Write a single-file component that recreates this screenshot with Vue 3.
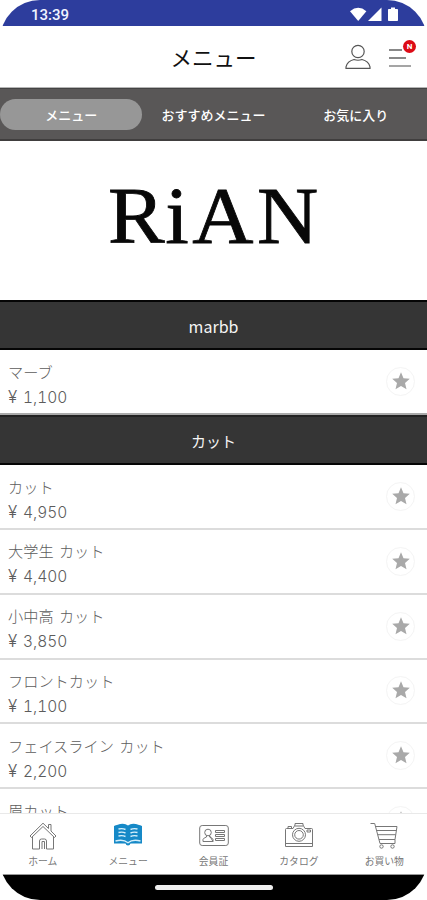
<script setup>
const tabs = ['メニュー', 'おすすめメニュー', 'お気に入り']

const sections = [
  {
    title: 'marbb',
    latin: true,
    items: [{ name: 'マーブ', price: '1,100' }]
  },
  {
    title: 'カット',
    items: [
      { name: 'カット', price: '4,950' },
      { name: '大学生 カット', price: '4,400' },
      { name: '小中高 カット', price: '3,850' },
      { name: 'フロントカット', price: '1,100' },
      { name: 'フェイスライン カット', price: '2,200' },
      { name: '眉カット' }
    ]
  }
]
</script>

<template>
  <div class="phone">
    <div class="status-bar">
      <span class="clock">13:39</span>
      <svg class="status-icons" viewBox="0 0 50 16" fill="#fff">
        <path d="M0 4.200Q8.200-2.600 16.400 4.200L8.200 14Z" />
        <path d="M31.500.5V14H18Z" />
        <path d="M41 .5h4v1.500h2.200q.8 0 .8.800v10.400q0 .8-.8.800h-8.400q-.8 0-.8-.8V2.800q0-.8.800-.8H41Z" />
      </svg>
    </div>

    <header class="header">
      <h1 class="header-title">メニュー</h1>
      <div class="header-actions">
        <svg class="user-icon" viewBox="0 0 26 26" fill="none" stroke="#555" stroke-width="1.200">
          <circle cx="13" cy="7.500" r="6.200" />
          <path d="M1 24.300v-1.500c1-4.300 4-6.300 8-7.300q4 1.500 8 0c4 1 7 3 8 7.300v1.500Z" />
        </svg>
        <div class="burger">
          <span></span><span></span><span></span>
          <b class="badge">N</b>
        </div>
      </div>
    </header>

    <nav class="tabs">
      <a v-for="(tab, i) in tabs" :key="tab" :class="['tab', { active: i === 0 }]">{{ tab }}</a>
    </nav>

    <main class="content">
      <div class="brand">
        <svg viewBox="0 0 214 70">
          <text x="1 55 80.500 141.500" y="60" transform="scale(1.060 1)">RiAN</text>
        </svg>
      </div>

      <section v-for="section in sections" :key="section.title">
        <h2 :class="['section-title', { latin: section.latin }]">{{ section.title }}</h2>
        <ul class="items">
          <li v-for="item in section.items" :key="item.name" class="item">
            <div class="item-text">
              <p class="item-name">{{ item.name }}</p>
              <p v-if="item.price" class="item-price"><span class="yen">¥</span>{{ item.price }}</p>
            </div>
            <span class="favorite">
              <svg viewBox="0 0 18 18" fill="#a9a9a9">
                <path d="M9 .3l2.500 5.900 6.300.6-4.800 4.200 1.500 6.300L9 14l-5.500 3.300L5 11 .2 6.800l6.300-.6Z" />
              </svg>
            </span>
          </li>
        </ul>
      </section>
    </main>

    <footer class="bottom-nav">
      <a class="nav-item">
        <svg viewBox="0 0 28 28" class="line">
          <path d="M1 14 14 1.200l5.500 5.300V2.500h2.500v6.500L27 14l-1.500 1.500L14 4.500 2.500 15.500Z" />
          <path d="M3.500 15v12h7v-8q0-2 2-2h3q2 0 2 2v8h7V15M13 27v-7.500h2.500V27" />
        </svg>
        <span>ホーム</span>
      </a>
      <a class="nav-item">
        <svg viewBox="0 0 28 28">
          <path fill="#1689c7" d="M0 4q2-.8 3-1Q10 .5 14 3.500q4-3 11-.5 1 .2 3 1V21.500H16.500q-.5 2-2.500 2t-2.500-2H0Z" />
          <path fill="none" stroke="#d5effb" stroke-width="1.400" d="M4.500 7q4-1 7 .5M4.500 10.500q4-1 7 .5M4.500 14q4-1 7 .5M23.500 7q-4-1-7 .5M23.500 10.500q-4-1-7 .5M23.500 14q-4-1-7 .5M1.500 19q8-2 12.500 1.700 4.500-3.700 12.500-1.700" />
        </svg>
        <span>メニュー</span>
      </a>
      <a class="nav-item">
        <svg viewBox="0 0 30 28" class="line card">
          <rect x=".7" y="3.500" width="28.600" height="20" rx="2.500" />
          <circle cx="9" cy="10.500" r="3.300" />
          <path d="M4 19.500v-2q1-2 3.500-2.500v-1.500M10.500 13.500V15q2.500.5 3.500 2.500v2ZM4 19.500h10M16.500 8.500h9v2h-9ZM16.500 12.500h9v2h-9ZM16.500 16.500h9v2h-9Z" />
        </svg>
        <span>会員証</span>
      </a>
      <a class="nav-item">
        <svg viewBox="0 0 28 28" class="line">
          <path d="M1.500 6.500H8l2-3.500V1.500h8V3l2 3.500h6.500q1 0 1 1V24.500H.5v-17q0-1 1-1ZM.5 21.500h27M3 6.500v-2h3.500v2M22 8h3.500v2H22ZM10 4h8" />
          <circle cx="14" cy="12.800" r="6.500" />
          <circle cx="14" cy="12.800" r="4.300" />
        </svg>
        <span>カタログ</span>
      </a>
      <a class="nav-item">
        <svg viewBox="0 0 28 28" class="line">
          <path d="M.5 1.500h4.200L10 21.500h15M5.500 4.500H27l-2 13H9M6.500 8.500h20M7.700 12.700h18M25 17.500v4" />
          <circle cx="11.500" cy="24.500" r="1.700" />
          <circle cx="22.500" cy="24.500" r="1.700" />
        </svg>
        <span>お買い物</span>
      </a>
    </footer>

    <div class="gesture-bar"><span></span></div>
  </div>
</template>

<style>
body {
  background: #fff;
}
</style>

<style scoped>
.phone {
  display: flex;
  flex-direction: column;
  width: 427px;
  height: 900px;
  overflow: hidden;
  border-radius: 40px;
  background: #fff;
  font-family: "Noto Sans CJK JP", "Noto Sans", sans-serif;
}

h1,
h2,
p,
ul {
  margin: 0;
  padding: 0;
}

.status-bar {
  display: flex;
  flex: none;
  align-items: center;
  justify-content: space-between;
  height: 26px;
  padding: 0 27px 0 31px;
  box-sizing: border-box;
  background: #2d3d9d;
}

.clock {
  margin-top: 4px;
  color: #f1f3ff;
  font: 500 15px/20px Roboto, sans-serif;
}

.status-icons {
  width: 50px;
  height: 16px;
  margin-top: 3px;
}

.header {
  display: flex;
  flex: none;
  align-items: center;
  justify-content: flex-end;
  position: relative;
  height: 62px;
  box-sizing: border-box;
  border-bottom: 1px solid #b5b5b5;
}

.header-title {
  position: absolute;
  left: 0;
  right: 0;
  top: 16px;
  color: #111;
  font-size: 21.500px;
  font-weight: 400;
  line-height: 30px;
  text-align: center;
}

.header-actions {
  display: flex;
  gap: 18px;
  padding-right: 15px;
}

.user-icon {
  width: 26px;
  height: 26px;
}

.burger {
  position: relative;
  display: flex;
  flex-direction: column;
  gap: 6px;
  width: 23px;
  padding-top: 5px;
}

.burger span {
  width: 13px;
  height: 2px;
  background: #888;
}

.burger span:nth-child(2) {
  width: 17px;
}

.burger span:nth-child(3) {
  width: 22px;
  background: #a5a5a5;
}

.badge {
  position: absolute;
  top: -4px;
  right: -4px;
  width: 13px;
  height: 13px;
  border-radius: 50%;
  background: #dc0b16;
  color: #fff;
  font: 700 8px/13px Roboto, sans-serif;
  text-align: center;
}

.tabs {
  display: flex;
  flex: none;
  align-items: center;
  height: 53px;
  box-sizing: border-box;
  border-top: 1px solid #444;
  border-bottom: 2px solid #403e3e;
  background: #595757;
}

.tab {
  flex: 1;
  height: 31px;
  border-radius: 16px;
  color: #fff;
  font-size: 13px;
  font-weight: 500;
  line-height: 32px;
  text-align: center;
  white-space: nowrap;
}

.tab.active {
  background: #979797;
}

.content {
  flex: 1;
  min-height: 0;
  overflow: hidden;
}

.brand {
  display: flex;
  justify-content: center;
  height: 159.400px;
  padding-top: 42px;
  box-sizing: border-box;
}

.brand svg {
  width: 214px;
  height: 70px;
  overflow: visible;
}

.brand text {
  fill: #080808;
  stroke: #080808;
  stroke-width: 0.8;
  font-family: "Liberation Serif", serif;
  font-size: 80px;
}

.section-title {
  height: 50px;
  box-sizing: border-box;
  border-top: 2px solid #222;
  border-bottom: 2px solid #050505;
  background: #353535;
  color: #f5f5f5;
  font-size: 15px;
  font-weight: 400;
  line-height: 48px;
  text-align: center;
}

.section-title.latin {
  border-top-color: #050505;
  font-size: 16px;
}

.items {
  list-style: none;
}

.item {
  display: flex;
  align-items: center;
  justify-content: space-between;
  height: 64.800px;
  padding: 0 12px 0 8px;
  box-sizing: border-box;
  border-bottom: 2px solid #dcdcdc;
}

.item:last-child {
  border-bottom-color: #aaa;
}

.item-text {
  height: 52px;
  padding-top: 4px;
}

.item-name,
.item-price {
  color: #5c5c5c;
  font-size: 15.200px;
  font-weight: 300;
  line-height: 26px;
  white-space: nowrap;
  word-spacing: 2px;
}

.item-price {
  font-family: Inter, sans-serif;
  font-size: 15.500px;
  font-variant-numeric: tabular-nums;
}

.yen {
  display: inline-block;
  width: 15px;
  font-size: 17px;
}

.favorite {
  display: flex;
  align-items: center;
  justify-content: center;
  width: 29px;
  height: 29px;
  box-sizing: border-box;
  border: 1.500px solid #f4f4f4;
  border-radius: 50%;
}

.favorite svg {
  width: 18px;
  height: 18px;
  margin-bottom: 1px;
}

.bottom-nav {
  display: flex;
  flex: none;
  height: 62px;
  box-sizing: border-box;
  border-top: 1px solid #e9e9e9;
  border-bottom: 1px solid #999;
  background: #fff;
}

.nav-item {
  display: flex;
  flex: 1;
  flex-direction: column;
  align-items: center;
  padding-top: 8px;
  color: #777;
  font-size: 9.800px;
  line-height: 14px;
}

.nav-item svg {
  width: 28px;
  height: 28px;
  margin-bottom: 4px;
}

.nav-item svg.card {
  width: 30px;
}

.line {
  fill: none;
  stroke: #777;
  stroke-width: 1;
}

.gesture-bar {
  display: flex;
  flex: none;
  justify-content: center;
  height: 25px;
  background: #000;
}

.gesture-bar span {
  width: 118px;
  height: 5px;
  margin-top: 10px;
  border-radius: 3px;
  background: #eee;
}
</style>
